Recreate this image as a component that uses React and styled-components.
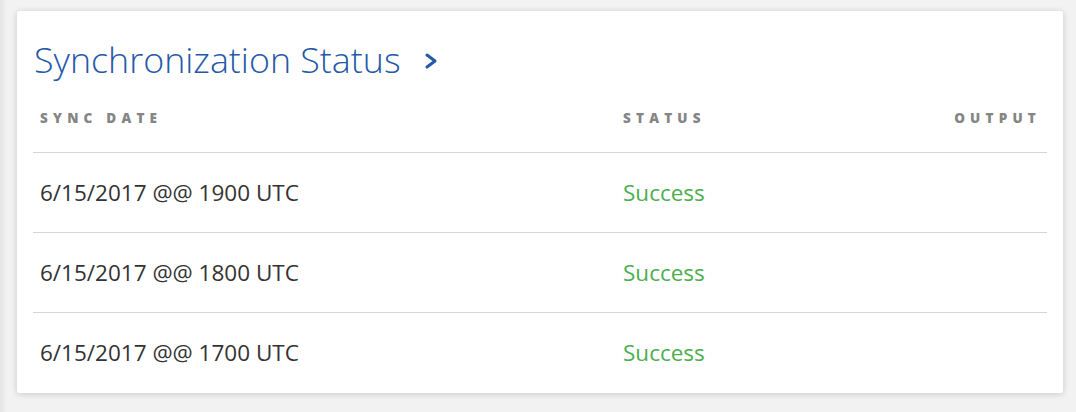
import React from "react";
import styled, { createGlobalStyle } from "styled-components";

const GlobalStyle = createGlobalStyle`
  html, body {
    margin: 0;
    padding: 0;
  }
  body {
    background: linear-gradient(to right, #e4e4e4 0px, #f2f2f2 7px, #f2f2f2 100%);
    font-family: "Open Sans", "Liberation Sans", sans-serif;
    -webkit-font-smoothing: antialiased;
  }
`;

const syncs = [
  { id: 1, date: "6/15/2017 @@ 1900 UTC", status: "Success" },
  { id: 2, date: "6/15/2017 @@ 1800 UTC", status: "Success" },
  { id: 3, date: "6/15/2017 @@ 1700 UTC", status: "Success" },
];

const ChevronIcon = () => (
  <svg width="16" height="20" viewBox="0 0 16 20" fill="none">
    <polyline
      points="4,4 12,10 4,16"
      stroke="#2559a8"
      strokeWidth="3"
      strokeLinecap="round"
      strokeLinejoin="round"
    />
  </svg>
);

const App = () => (
  <Page>
    <GlobalStyle />
    <Card>
      <Title>
        Synchronization Status
        <ChevronLink href="#">
          <ChevronIcon />
        </ChevronLink>
      </Title>
      <Table>
        <thead>
          <tr>
            <HeaderCell>Sync Date</HeaderCell>
            <HeaderCell>Status</HeaderCell>
            <HeaderCell $align="right">Output</HeaderCell>
          </tr>
        </thead>
        <tbody>
          {syncs.map((s) => (
            <Row key={s.id}>
              <DateCell>{s.date}</DateCell>
              <StatusCell>{s.status}</StatusCell>
              <DateCell />
            </Row>
          ))}
        </tbody>
      </Table>
    </Card>
  </Page>
);

// Styled Components

const Page = styled.div`
  padding: 11px 13px 20px 17px;
`;

const Card = styled.div`
  background: #fff;
  border-radius: 2px;
  box-shadow: 0 1px 6px rgba(0, 0, 0, 0.18);
  padding: 22px 16px 0;
`;

const Title = styled.h2`
  display: flex;
  align-items: center;
  margin: 0 0 0 1px;
  font-family: "Open Sans", "Liberation Sans", sans-serif;
  font-weight: 300;
  font-size: 35.8px;
  line-height: 52px;
  color: #2559a8;
`;

const ChevronLink = styled.a`
  display: inline-flex;
  margin-left: 22px;
  margin-top: 4px;
`;

const Table = styled.table`
  width: 100%;
  border-collapse: collapse;
  margin-top: 18px;
`;

const HeaderCell = styled.th`
  padding: 6px 6px 25px 7px;
  font-size: 13.5px;
  font-weight: 800;
  letter-spacing: 5.2px;
  text-transform: uppercase;
  color: #858585;
  text-align: ${(p) => p.$align || "left"};
  border-bottom: 1px solid #d6d6d6;

  &:first-child {
    width: 570px;
  }
`;

const Row = styled.tr`
  height: 80px;
  border-bottom: 1px solid #d6d6d6;

  &:last-child {
    border-bottom: none;
  }
`;

const DateCell = styled.td`
  padding: 0 7px;
  font-size: 22.5px;
  color: #333;
`;

const StatusCell = styled.td`
  padding: 0 7px;
  font-size: 22.5px;
  color: #4cae4f;
`;

export default App;
